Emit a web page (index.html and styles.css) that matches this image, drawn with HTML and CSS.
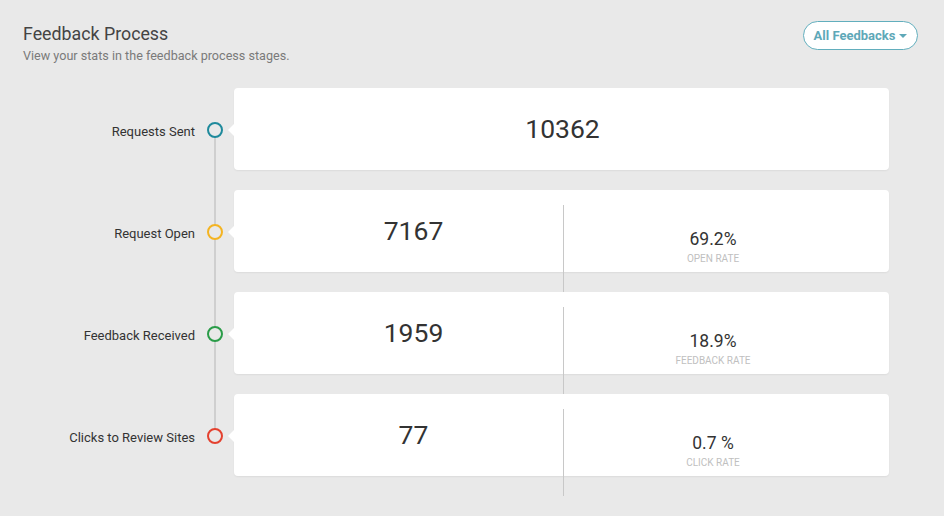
FILE: index.html
```html
<!DOCTYPE html>
<html>
<head>
<meta charset="utf-8">
<link rel="stylesheet" href="styles.css">
</head>
<body>
<div class="page">
  <header class="head">
    <div>
      <h1 class="title">Feedback Process</h1>
      <p class="subtitle">View your stats in the feedback process stages.</p>
    </div>
    <button class="filter">All Feedbacks <span class="caret"></span></button>
  </header>

  <div class="timeline">
    <div class="row">
      <div class="label">Requests Sent</div>
      <div class="marker"><span class="dot teal"></span></div>
      <div class="card single">
        <div class="big">10362</div>
      </div>
    </div>
    <div class="row">
      <div class="label">Request Open</div>
      <div class="marker"><span class="dot yellow"></span></div>
      <div class="card split">
        <div class="col left"><div class="big">7167</div></div>
        <div class="col right"><div class="rate">69.2%</div><div class="cap">OPEN RATE</div></div>
      </div>
    </div>
    <div class="row">
      <div class="label">Feedback Received</div>
      <div class="marker"><span class="dot green"></span></div>
      <div class="card split">
        <div class="col left"><div class="big">1959</div></div>
        <div class="col right"><div class="rate">18.9%</div><div class="cap">FEEDBACK RATE</div></div>
      </div>
    </div>
    <div class="row">
      <div class="label">Clicks to Review Sites</div>
      <div class="marker"><span class="dot red"></span></div>
      <div class="card split">
        <div class="col left"><div class="big">77</div></div>
        <div class="col right"><div class="rate">0.7 %</div><div class="cap">CLICK RATE</div></div>
      </div>
    </div>
  </div>
</div>
</body>
</html>
```

FILE: styles.css
```css
* { box-sizing: border-box; }
html, body { margin: 0; padding: 0; }
body {
  background: #e9e9e9;
  font-family: Roboto, "Liberation Sans", Arial, sans-serif;
  color: #333;
  width: 944px;
  height: 516px;
  overflow: hidden;
}
.page { padding: 22px 26px 0 0; }
.head {
  display: flex;
  justify-content: space-between;
  align-items: flex-start;
  padding-left: 23px;
}
.title {
  margin: 0;
  font-size: 17.8px;
  font-weight: 400;
  color: #444;
  line-height: 24px;
}
.subtitle {
  margin: 0;
  font-size: 12.6px;
  color: #7a7a7a;
  line-height: 18px;
  margin-top: 1px;
}
.filter {
  margin-top: -1px;
  height: 29px;
  width: 115px;
  border: 1px solid #62aebd;
  border-radius: 15px;
  background: #fff;
  color: #5ea8b8;
  font-family: Roboto, "Liberation Sans", Arial, sans-serif;
  font-weight: 700;
  font-size: 13px;
  padding: 0;
  display: flex;
  align-items: center;
  justify-content: center;
  gap: 4px;
}
.caret {
  width: 0; height: 0;
  border-left: 4px solid transparent;
  border-right: 4px solid transparent;
  border-top: 4px solid #5ea8b8;
  margin-top: 1px;
}
.timeline {
  position: relative;
  margin-top: 23px;
  display: flex;
  flex-direction: column;
  gap: 20px;
}
.timeline::before {
  content: "";
  position: absolute;
  left: 214px;
  top: 41px;
  bottom: 41px;
  width: 2px;
  background: #cfcfcf;
}
.row {
  display: grid;
  grid-template-columns: 196px 38px 655px;
  align-items: center;
  height: 82px;
}
.label {
  text-align: right;
  font-size: 13px;
  color: #333;
  padding-right: 1px;
  padding-top: 4px;
}
.marker {
  position: relative;
  height: 82px;
  display: flex;
  align-items: center;
  justify-content: center;
}
.marker::after {
  content: "";
  position: absolute;
  right: 0;
  top: 36px;
  border-top: 6px solid transparent;
  border-bottom: 6px solid transparent;
  border-right: 6px solid #fff;
}
.dot {
  position: relative;
  z-index: 1;
  width: 16px;
  height: 16px;
  border-radius: 50%;
  border: 2px solid;
  background: #e9e9e9;
  margin-top: 2px;
}
.teal { border-color: #1f8a9c; }
.yellow { border-color: #f4b422; }
.green { border-color: #2a9c48; }
.red { border-color: #e4412f; }
.card {
  background: #fff;
  height: 82px;
  border-radius: 4px;
  box-shadow: 0 1px 2px rgba(0,0,0,0.06);
}
.single {
  display: flex;
  align-items: center;
  justify-content: center;
}
.big {
  font-size: 26.5px;
  color: #333;
  line-height: 30px;
}
.single .big { margin-top: 0; margin-left: 2px; }
.split {
  display: grid;
  grid-template-columns: 1fr 1fr;
  padding: 15px 27px 0 30px;
}
.col {
  height: 87px;
  text-align: center;
}
.left { padding-top: 11px; }
.right {
  border-left: 1px solid #c8c8c8;
  padding-top: 23px;
}
.rate {
  font-size: 17.5px;
  color: #333;
  line-height: 22px;
}
.cap {
  font-size: 10px;
  color: #c0c0c0;
  line-height: 14px;
  margin-top: 2px;
}
```
